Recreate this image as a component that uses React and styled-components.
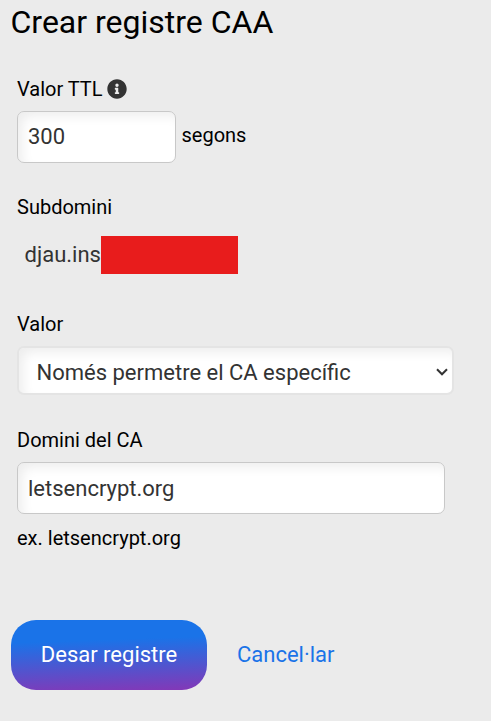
import React from 'react';
import styled, { createGlobalStyle } from 'styled-components';
import { FaInfoCircle } from 'react-icons/fa';

const GlobalStyle = createGlobalStyle`
  * { box-sizing: border-box; }
  body {
    margin: 0;
    background: #ebebeb;
    color: #000;
    font-family: Roboto, "Liberation Sans", sans-serif;
  }
`;

const Page = styled.main`
  width: 491px;
  height: 721px;
  overflow: hidden;
  padding-left: 11px;
  background: #ebebeb;
`;

const Title = styled.h1`
  margin: 0 0 33px -0.5px;
  font-size: 32px;
  line-height: 44px;
  font-weight: 400;
  white-space: nowrap;
`;

const Field = styled.div`
  display: flex;
  flex-direction: column;
  align-items: flex-start;
  padding-left: 6px;
  margin-bottom: ${(p) => p.$after}px;
`;

const Label = styled.label`
  display: flex;
  align-items: center;
  gap: 4.8px;
  height: 24px;
  margin-bottom: ${(p) => p.$gap}px;
  font-size: 20px;
  line-height: 24px;
  white-space: nowrap;
`;

const InfoIcon = styled(FaInfoCircle)`
  width: 20px;
  height: 20px;
  margin-bottom: 1px;
  color: #333;
`;

const InputRow = styled.div`
  display: flex;
  align-items: center;
  gap: 5.5px;
`;

const Input = styled.input`
  width: ${(p) => p.$width}px;
  height: 52px;
  padding: 0 10px ${(p) => p.$lift || 0}px;
  border: 1px solid #c8c8c8;
  border-radius: 7px;
  outline: none;
  background: #fff;
  box-shadow: inset 6px 6px 12px -2px #ededed;
  color: #333;
  font: 400 22px/28px Roboto, sans-serif;
`;

const Hint = styled.span`
  font-size: 20px;
  line-height: 24px;
  white-space: nowrap;
`;

const Unit = styled(Hint)`
  padding-bottom: 4px;
`;

const Help = styled(Hint)`
  margin-top: 12px;
`;

const Domain = styled.div`
  display: flex;
  align-items: center;
  height: 38px;
  padding-left: 7.5px;
  color: #333;
  font-size: 22px;
`;

const DomainText = styled.span`
  width: 76.5px;
  padding-bottom: 1px;
  white-space: nowrap;
`;

const Redaction = styled.span`
  width: 137.4px;
  height: 38px;
  background: #e81c1c;
`;

const SelectBox = styled.button`
  display: flex;
  align-items: center;
  justify-content: space-between;
  width: 437px;
  height: 49px;
  padding: 4px 4px 0 17.5px;
  border: 2px solid #e4e4e4;
  border-radius: 7px;
  background: #fff;
  box-shadow: inset 6px 6px 12px -2px #ededed;
  color: #333;
  font: 400 22px/28px Roboto, sans-serif;
  white-space: nowrap;
`;

const Chevron = styled.svg`
  width: 12px;
  height: 8px;
  margin-bottom: 2px;
  fill: none;
  stroke: #333;
  stroke-width: 2;
`;

const Actions = styled.div`
  display: flex;
  align-items: center;
  gap: 30px;
`;

const SaveButton = styled.button`
  width: 196px;
  height: 70px;
  padding: 0;
  border: 0;
  border-radius: 25px;
  background: linear-gradient(178deg, #1a73e8 30%, #8139b8 98%);
  color: #fff;
  font: 400 22px/28px Roboto, sans-serif;
  white-space: nowrap;
`;

const CancelLink = styled.a`
  color: #1a73e8;
  font-size: 22px;
  line-height: 28px;
  text-decoration: none;
  white-space: nowrap;
`;

export default function App() {
  return (
    <>
      <GlobalStyle />
      <Page>
        <Title>Crear registre CAA</Title>
        <Field $after={32}>
          <Label $gap={10} htmlFor="ttl">Valor TTL <InfoIcon /></Label>
          <InputRow>
            <Input id="ttl" $width={159} $lift={2} defaultValue="300" />
            <Unit>segons</Unit>
          </InputRow>
        </Field>
        <Field $after={38}>
          <Label as="div" $gap={17}>Subdomini</Label>
          <Domain>
            <DomainText>djau.ins</DomainText>
            <Redaction />
          </Domain>
        </Field>
        <Field $after={33}>
          <Label $gap={10} htmlFor="value">Valor</Label>
          <SelectBox id="value" type="button">
            Només permetre el CA específic
            <Chevron viewBox="0 0 12 8"><path d="M1 1.3 6 6.3 11 1.3" /></Chevron>
          </SelectBox>
        </Field>
        <Field $after={70}>
          <Label $gap={10} htmlFor="ca">Domini del CA</Label>
          <Input id="ca" $width={428} defaultValue="letsencrypt.org" />
          <Help>ex. letsencrypt.org</Help>
        </Field>
        <Actions>
          <SaveButton type="button">Desar registre</SaveButton>
          <CancelLink href="#">Cancel·lar</CancelLink>
        </Actions>
      </Page>
    </>
  );
}
